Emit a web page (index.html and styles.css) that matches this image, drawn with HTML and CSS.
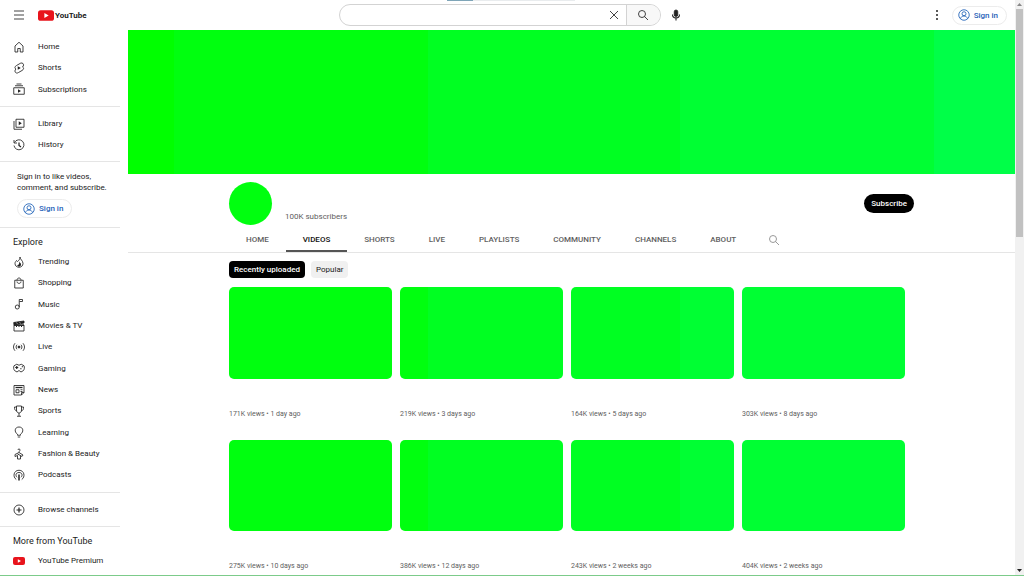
FILE: index.html
```html
<!DOCTYPE html>
<html lang="en">
<head>
<meta charset="utf-8">
<title>YouTube</title>
<link rel="stylesheet" href="styles.css">
</head>
<body>
<svg class="sprite" aria-hidden="true">
  <symbol id="i-user" viewBox="0 0 24 24"><circle cx="12" cy="12" r="10.5"/><circle cx="12" cy="9.500" r="4"/><path d="M5 19.500c1-4 3.500-5.500 7-5.500s6 1.500 7 5.500"/></symbol>
  <symbol id="i-search" viewBox="0 0 24 24"><circle cx="10" cy="10" r="7"/><path d="M15 15l7 7"/></symbol>
  <symbol id="i-tube" viewBox="0 0 30 20"><rect width="30" height="20" rx="5" fill="#e8141c" stroke="none"/><path d="M12 5.500v9l8-4.500z" fill="#fff" stroke="none"/></symbol>
</svg>
<div class="page">
  <div class="main">
    <header class="topbar">
      <div class="brand">
        <button class="icon-btn" aria-label="Menu"><svg class="icon" viewBox="0 0 24 24"><path d="M2 4h20M2 12h20M2 20h20"/></svg></button>
        <a class="logo" href="#"><svg class="logo-mark"><use href="#i-tube"/></svg><span>YouTube</span></a>
      </div>
      <div class="search-area">
        <form class="search">
          <input type="text" aria-label="Search">
          <button type="button" class="clear" aria-label="Clear"><svg class="icon" viewBox="0 0 24 24"><path d="M4 4l16 16M20 4L4 20"/></svg></button>
          <button type="button" class="go" aria-label="Search"><svg class="icon"><use href="#i-search"/></svg></button>
        </form>
        <button class="icon-btn" aria-label="Search with your voice"><svg class="icon" viewBox="0 0 24 24"><rect x="8.500" y="2" width="7" height="13" rx="3.500" fill="currentColor"/><path d="M5 11c0 9 14 9 14 0M12 18v5" stroke-width="2.200"/></svg></button>
      </div>
      <div class="account">
        <button class="icon-btn" aria-label="Settings"><svg class="icon" viewBox="0 0 24 24"><g fill="currentColor" stroke="none"><circle cx="12" cy="4" r="2"/><circle cx="12" cy="12" r="2"/><circle cx="12" cy="20" r="2"/></g></svg></button>
        <a class="signin" href="#"><svg class="icon"><use href="#i-user"/></svg>Sign in</a>
      </div>
      <div class="load-strip"></div>
    </header>
    <div class="body">
      <nav class="sidebar">
        <section class="nav-section">
          <a class="nav-item" href="#"><svg class="icon" viewBox="0 0 24 24"><path d="M4 22V10l8-7.500 8 7.500v12h-5.500v-7h-5v7z"/></svg>Home</a>
          <a class="nav-item" href="#"><svg class="icon" viewBox="0 0 24 24"><path d="M14 3L7 7c-4 2-4 6-1 7-3 2-3 7 1 8 2 .500 3-.500 4-1l7-4c4-2 4-6 1-7 3-2 3-7-1-8-2-.500-3 .500-4 1z"/><path d="M9.500 8.500v7l6-3.500z" fill="currentColor" stroke="none"/></svg>Shorts</a>
          <a class="nav-item" href="#"><svg class="icon" viewBox="0 0 24 24"><path d="M7 2h10M4 5.500h16M1.500 9.500h21v13h-21z"/><path d="M10 12.500v7l6-3.500z" fill="currentColor" stroke="none"/></svg>Subscriptions</a>
        </section>
        <section class="nav-section">
          <a class="nav-item" href="#"><svg class="icon" viewBox="0 0 24 24"><path d="M6 2.500h16v16H6zM2 6v16.500h16"/><path d="M11.500 6.500v8l6-4z" fill="currentColor" stroke="none"/></svg>Library</a>
          <a class="nav-item" href="#"><svg class="icon" viewBox="0 0 24 24"><path d="M3 7a10 10 0 1 1-1 6M2 2v6h6"/><path d="M12 7v6l4 3" stroke-width="2.400"/></svg>History</a>
        </section>
        <section class="nav-section nav-promo">
          <p>Sign in to like videos, comment, and subscribe.</p>
          <a class="signin" href="#"><svg class="icon"><use href="#i-user"/></svg>Sign in</a>
        </section>
        <section class="nav-section nav-explore">
          <h2>Explore</h2>
          <div>
            <a class="nav-item" href="#"><svg class="icon" viewBox="0 0 24 24"><path d="M14 2c0 5 6 7 6 13 0 4.500-3.500 7.500-8 7.500S4 19.500 4 15c0-3 2-4 3-6l2 2c3-2 5-5 5-9z"/><path d="M12 11c2 3 4 3 4 6s-2 4-4 4-4-1-3-3c3 0 4-3 3-7z" fill="currentColor" stroke="none"/></svg>Trending</a>
            <a class="nav-item" href="#"><svg class="icon" viewBox="0 0 24 24"><path d="M3.500 6.500h17v15.500h-17zM8 6.500c0-6 8-6 8 0M8 9c0 5 8 5 8 0"/></svg>Shopping</a>
            <a class="nav-item" href="#"><svg class="icon" viewBox="0 0 24 24"><circle cx="8.500" cy="18" r="4"/><path d="M12.500 18V3H19v4h-6"/></svg>Music</a>
            <a class="nav-item" href="#"><svg class="icon" viewBox="0 0 24 24"><path d="M2 10h20v12H2z"/><path d="M1.500 5L22 2v4L2 10z" fill="currentColor"/><path d="M2 10.500h20" stroke-width="2.600"/><path d="M7 5l2 3M13 4l2 3" stroke="#fff" stroke-width="1"/><path d="M6 13h2M11 13h2M16 13h2" stroke-width="2.400"/></svg>Movies &amp; TV</a>
            <a class="nav-item" href="#"><svg class="icon" viewBox="0 0 24 24"><circle cx="12" cy="12" r="2" fill="currentColor"/><path d="M8 7.500c-2.500 3-2.500 6 0 9M16 7.500c2.500 3 2.500 6 0 9M4 4.500c-4 5-4 10 0 15M20 4.500c4 5 4 10 0 15"/></svg>Live</a>
            <a class="nav-item" href="#"><svg class="icon" viewBox="0 0 24 24"><path d="M12 6.500L7.500 4.500 2 7.500C.500 11 1.500 15 3 17l5 3 4-3 4 3 5-3c1.500-2 2.500-6 1-9.500l-5.500-3z"/><path d="M4.500 11h6M7.500 8v6M14.500 13.500h2.500M17.500 9.500h2.500" stroke-width="2.400"/></svg>Gaming</a>
            <a class="nav-item" href="#"><svg class="icon" viewBox="0 0 24 24"><path d="M2 3h20v14l-5 5H2zM17 22v-5h5"/><path d="M5 7h14" stroke-width="2.600"/><path d="M6 11.500h6v6H6zM15 11.500h4M15 15h4"/></svg>News</a>
            <a class="nav-item" href="#"><svg class="icon" viewBox="0 0 24 24"><path d="M7 2h10v8c0 8-10 8-10 0zM7 4H3c0 5 1 7 4.500 8M17 4h4c0 5-1 7-4.500 8M12 16v6M8 22.500h8"/></svg>Sports</a>
            <a class="nav-item" href="#"><svg class="icon" viewBox="0 0 24 24"><path d="M9 18.500v-2C2 12 3 2 12 2s10 10 3 14.500v2zM9.500 22h5"/></svg>Learning</a>
            <a class="nav-item" href="#"><svg class="icon" viewBox="0 0 24 24"><path d="M10 4c0-3 4-3 4 0 0 2-2 2-2 5M12 9l8 5-2 3-3-2v7H9v-7l-5 2v-4z"/><path d="M9 12l6 3"/></svg>Fashion &amp; Beauty</a>
            <a class="nav-item" href="#"><svg class="icon" viewBox="0 0 24 24"><path d="M6.500 21C-1 16 1 2.500 12 2.500S25 16 17.500 21M8 16.500c-4-4-2-9.500 4-9.500s8 5.500 4 9.500"/><path d="M12 11v12" stroke-width="3"/></svg>Podcasts</a>
          </div>
        </section>
        <section class="nav-section">
          <a class="nav-item" href="#"><svg class="icon" viewBox="0 0 24 24"><circle cx="12" cy="12" r="10"/><path d="M12 7v10M7 12h10" stroke-width="2.400"/></svg>Browse channels</a>
        </section>
        <section class="nav-section">
          <h2>More from YouTube</h2>
          <a class="nav-item" href="#"><svg class="icon"><use href="#i-tube"/></svg>YouTube Premium</a>
        </section>
      </nav>
      <main class="channel">
        <div class="banner tint"></div>
        <div class="channel-head column">
          <div class="avatar tint"></div>
          <p>100K subscribers</p>
          <button class="subscribe">Subscribe</button>
        </div>
        <div class="tabs">
          <div class="tab-list column">
            <a href="#">HOME</a><a href="#" class="active">VIDEOS</a><a href="#">SHORTS</a><a href="#">LIVE</a><a href="#">PLAYLISTS</a><a href="#">COMMUNITY</a><a href="#">CHANNELS</a><a href="#">ABOUT</a>
            <button class="icon-btn" aria-label="Search channel"><svg class="icon"><use href="#i-search"/></svg></button>
          </div>
        </div>
        <div class="column">
          <div class="chips"><button class="chip selected">Recently uploaded</button><button class="chip">Popular</button></div>
          <div class="videos">
            <a href="#"><div class="thumb tint"></div><p>171K views • 1 day ago</p></a>
            <a href="#"><div class="thumb tint"></div><p>219K views • 3 days ago</p></a>
            <a href="#"><div class="thumb tint"></div><p>164K views • 5 days ago</p></a>
            <a href="#"><div class="thumb tint"></div><p>303K views • 8 days ago</p></a>
            <a href="#"><div class="thumb tint"></div><p>275K views • 10 days ago</p></a>
            <a href="#"><div class="thumb tint"></div><p>386K views • 12 days ago</p></a>
            <a href="#"><div class="thumb tint"></div><p>243K views • 2 weeks ago</p></a>
            <a href="#"><div class="thumb tint"></div><p>404K views • 2 weeks ago</p></a>
          </div>
        </div>
      </main>
    </div>
  </div>
  <div class="scrollbar" aria-hidden="true">
    <svg viewBox="0 0 9 9"><path d="M2 6h5L4.500 3z" fill="#888"/></svg>
    <div class="scroll-track"><div class="scroll-thumb"></div></div>
    <svg viewBox="0 0 9 9"><path d="M2 3h5L4.500 6z" fill="#222"/></svg>
  </div>
</div>
</body>
</html>
```
FILE: styles.css
```css
* { box-sizing: border-box; }
body {
  margin: 0;
  font-family: Roboto, "Liberation Sans", sans-serif;
  font-size: 8px;
  line-height: 11px;
  color: #222;
  background: #fff;
}
p, h2 { margin: 0; }
a { color: inherit; text-decoration: none; }
button, input { font: inherit; color: inherit; border: 0; padding: 0; background: none; }
.sprite { position: absolute; width: 0; height: 0; }
.icon {
  display: block;
  flex: none;
  width: 12px;
  height: 12px;
  fill: none;
  stroke: currentColor;
  stroke-width: 1.7;
}
.icon-btn { display: grid; place-items: center; }

.page { display: flex; height: 100vh; overflow: hidden; border-bottom: 1px solid #7ccb8a; }
.main { flex: 1; min-width: 0; }
.body { display: flex; }

/* Bands of green run across the window behind every picture slot. */
.tint {
  background: linear-gradient(90deg,
    #00ff00 17%, #00ff0f 17% 41.8%,
    #00ff22 41.8% 66.4%, #00ff33 66.4% 91.2%,
    #00ff48 91.2%) fixed;
}

/* Top bar */
.topbar {
  position: relative;
  display: flex;
  align-items: center;
  justify-content: space-between;
  height: 30px;
  padding: 0 8px 0 13px;
}
.load-strip {
  position: absolute;
  top: 0;
  left: 44%;
  width: 128px;
  height: 1px;
  background: linear-gradient(90deg, #7fa5b8 20%, #e9ecee 20%);
}
.brand, .account, .search-area { display: flex; align-items: center; }
.brand { gap: 13px; flex: 1; }
.logo { display: flex; align-items: center; gap: 1px; font-size: 8px; font-weight: 700; }
.logo-mark { width: 16px; height: 11px; }
.search-area { gap: 9px; flex: none; width: 343px; }
.search {
  display: flex;
  flex: 1;
  height: 22px;
  border: 1px solid #d3d3d3;
  border-radius: 11px;
  overflow: hidden;
}
.search input { flex: 1; min-width: 0; padding-left: 10px; outline: 0; }
.clear { width: 24px; display: grid; place-items: center; }
.go { width: 34px; display: grid; place-items: center; border-left: 1px solid #d3d3d3; background: #f8f8f8; }
.account { gap: 9px; flex: 1; justify-content: flex-end; }
.signin {
  display: inline-flex;
  align-items: center;
  gap: 4px;
  height: 19px;
  padding: 0 8px 0 5px;
  border: 1px solid #ececec;
  border-radius: 10px;
  font-weight: 500;
  color: #1f62b8;
}

/* Sidebar */
.sidebar { flex: none; width: 120px; margin-right: 8px; }
.nav-section { padding: 6px 0; border-bottom: 1px solid #e5e5e5; }
.nav-section:last-child { border: 0; }
.nav-section h2 { padding-left: 13px; font-size: 9px; line-height: 17px; font-weight: 400; }
.nav-item { display: flex; align-items: center; gap: 13px; height: 21px; padding-left: 13px; }
.nav-item:nth-child(3n) { height: 22px; }
.nav-promo { padding: 9px 12px 9px 17px; }
.nav-promo .signin { margin-top: 6px; display: flex; width: max-content; }
.nav-explore { padding-bottom: 7px; }

/* Channel */
.channel { flex: 1; min-width: 0; }
.column { max-width: 685px; margin: 0 auto; }
.banner { height: 144px; }
.channel-head { display: flex; align-items: center; padding: 8px 0 4px; }
.avatar { width: 43px; height: 43px; border-radius: 50%; }
.channel-head p { align-self: flex-end; margin: 0 auto 3px 13px; color: #606060; }
.subscribe { height: 19px; padding: 0 7px; border-radius: 10px; background: #000; color: #fff; font-weight: 500; }
.tabs { border-bottom: 1px solid #e5e5e5; }
.tab-list { display: flex; height: 23px; font-weight: 500; color: #606060; }
.tab-list a { padding: 0 17px; line-height: 21px; border-bottom: 2px solid transparent; }
.tab-list .active { color: #111; border-color: #555; }
.tab-list .icon-btn { padding: 0 15px 2px; color: #888; }
.chips { display: flex; gap: 6px; padding: 8px 0 9px; }
.chip { height: 17px; padding: 0 5px; border-radius: 4px; background: #f0f0f0; }
.chip.selected { background: #000; color: #fff; font-weight: 500; }
.videos { display: grid; grid-template-columns: repeat(4, 1fr); gap: 20px 8px; padding-right: 9px; color: #606060; font-size: 7px; }
.thumb { aspect-ratio: 16 / 9; border-radius: 5px; margin-bottom: 30px; }

/* Scrollbar */
.scrollbar { display: flex; flex-direction: column; flex: none; width: 9px; background: #f1f1f1; }
.scrollbar svg { width: 9px; height: 9px; }
.scroll-track { flex: 1; padding: 0 1px; }
.scroll-thumb { height: 41%; background: #c1c1c1; }
```
